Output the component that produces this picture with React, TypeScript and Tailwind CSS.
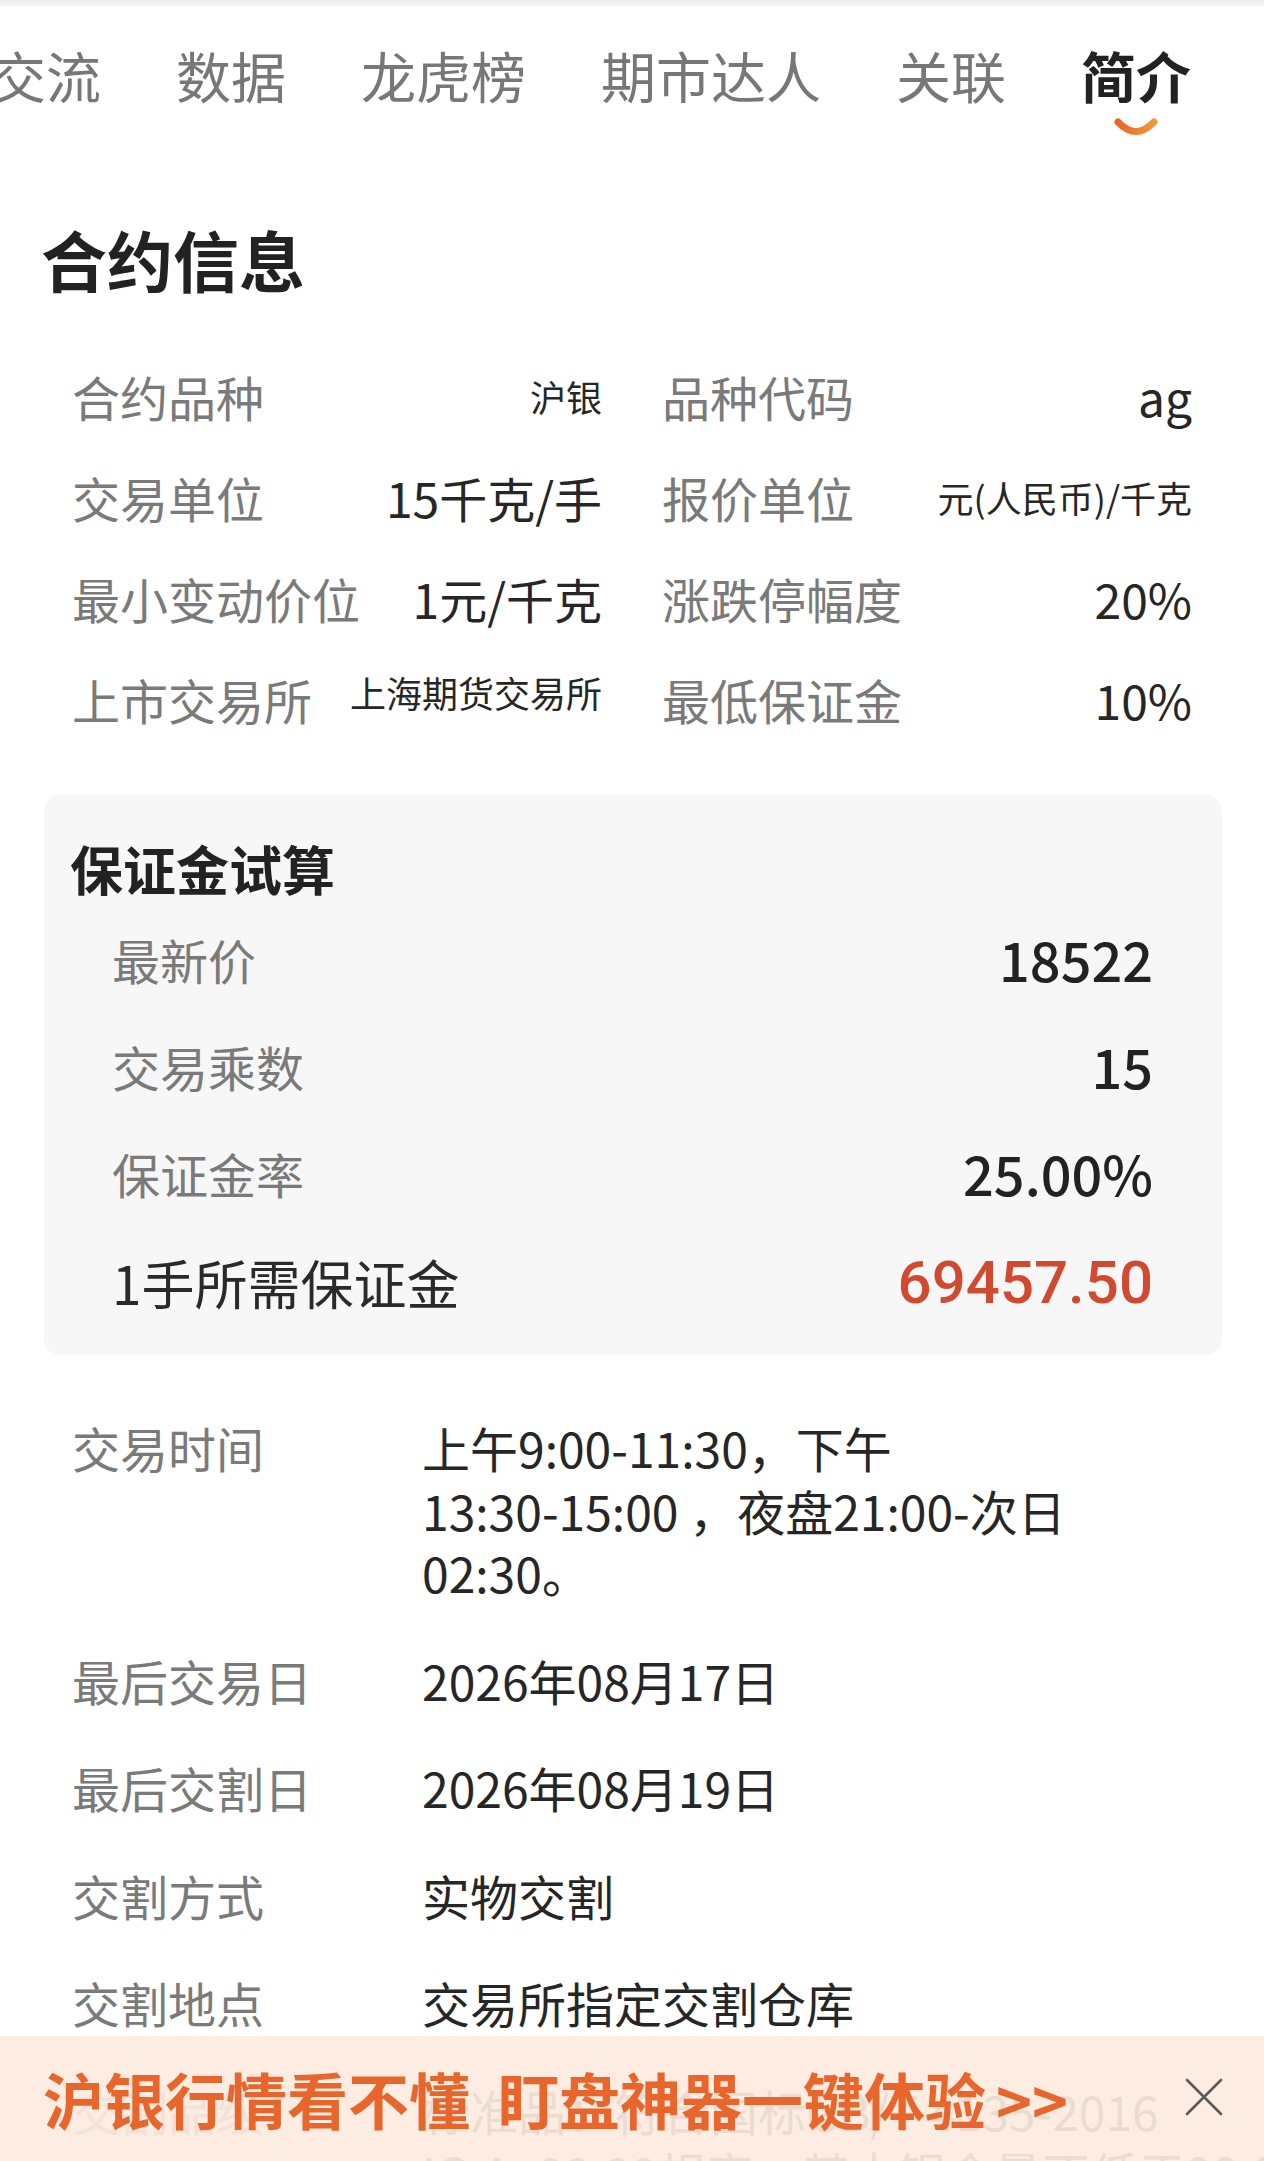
import React from "react";

const TABS = ["交流", "数据", "龙虎榜", "期市达人", "关联", "简介"];

const INFO: { label: string; value: string; small?: boolean; lift?: boolean }[] = [
  { label: "合约品种", value: "沪银", small: true },
  { label: "品种代码", value: "ag" },
  { label: "交易单位", value: "15千克/手" },
  { label: "报价单位", value: "元(人民币)/千克", small: true },
  { label: "最小变动价位", value: "1元/千克" },
  { label: "涨跌停幅度", value: "20%" },
  { label: "上市交易所", value: "上海期货交易所", small: true, lift: true },
  { label: "最低保证金", value: "10%" },
];

const CALC = [
  { label: "最新价", value: "18522" },
  { label: "交易乘数", value: "15" },
  { label: "保证金率", value: "25.00%" },
];

const DETAILS: { label: string; lines: string[] }[] = [
  { label: "交易时间", lines: ["上午9:00-11:30，下午", "13:30-15:00 ，夜盘21:00-次日", "02:30。"] },
  { label: "最后交易日", lines: ["2026年08月17日"] },
  { label: "最后交割日", lines: ["2026年08月19日"] },
  { label: "交割方式", lines: ["实物交割"] },
  { label: "交割地点", lines: ["交易所指定交割仓库"] },
  { label: "交割品级", lines: ["标准品：符合国标GB/T 4135-2016", "IC-Ag99.99规定，其中银含量不低于99.99%"] },
];

function Smile() {
  return (
    <svg width="48" height="22" viewBox="0 0 48 22">
      <defs>
        <linearGradient id="smile" x1="0" y1="0" x2="1" y2="0">
          <stop offset="0" stopColor="#ec6328" />
          <stop offset="1" stopColor="#ee9a3c" />
        </linearGradient>
      </defs>
      <path d="M6 5 Q24 24 42 5" fill="none" stroke="url(#smile)" strokeWidth="7" strokeLinecap="round" />
    </svg>
  );
}

export default function App() {
  return (
    <div className="relative w-[1264px] h-[2161px] overflow-hidden bg-white font-['Noto_Sans_CJK_SC',sans-serif]">
      <div className="h-[6px] bg-gradient-to-b from-[#ebebeb] to-[#f7f7f7]" />

      {/* tabs */}
      <div className="flex items-start gap-[75px] ml-[-9px] pt-[41px] whitespace-nowrap">
        {TABS.map((t) =>
          t === "简介" ? (
            <div key={t} className="flex flex-col items-center">
              <span className="text-[55px] leading-none font-bold text-[#222]">{t}</span>
              <div className="mt-[15px]">
                <Smile />
              </div>
            </div>
          ) : (
            <span key={t} className="text-[55px] leading-none text-[#777]">
              {t}
            </span>
          )
        )}
      </div>

      <h1 className="mt-[86px] pl-[41px] text-[66px] leading-none font-bold text-[#222]">合约信息</h1>

      <div className="mt-[54px] grid grid-cols-2 gap-x-[60px] px-[72px]">
        {INFO.map((it) => (
          <div key={it.label} className="flex h-[101px] items-center justify-between">
            <span className="text-[48px] leading-none text-[#7a7a7a]">{it.label}</span>
            <span
              className={
                it.small
                  ? `text-[36px] leading-none text-[#262626] ${it.lift ? "mb-[14px]" : ""}`
                  : "text-[48px] leading-none text-[#262626]"
              }
            >
              {it.value}
            </span>
          </div>
        ))}
      </div>

      {/* margin calculator */}
      <div className="mt-[46px] ml-[44px] mr-[42px] rounded-[16px] bg-[#f7f7f7] pt-[47px] pb-[16px] pl-[26px] pr-[69px]">
        <div className="text-[53px] leading-none font-bold text-[#222]">保证金试算</div>
        <div className="mt-[10px] pl-[42px]">
          {CALC.map((r) => (
            <div key={r.label} className="flex h-[107px] items-center justify-between">
              <span className="text-[48px] leading-none text-[#7a7a7a]">{r.label}</span>
              <span className="text-[54px] leading-none font-medium text-[#222]">{r.value}</span>
            </div>
          ))}
          <div className="flex h-[113px] items-center justify-between">
            <span className="text-[53px] leading-none text-[#2a2a2a]">1手所需保证金</span>
            <span className="font-['Roboto',sans-serif] text-[60px] leading-none font-medium text-[#d14a30]">69457.50</span>
          </div>
        </div>
      </div>

      {/* details */}
      <div className="mt-[61px] flex flex-col gap-[45px] px-[72px]">
        {DETAILS.map((d) => (
          <div key={d.label} className="flex items-start">
            <span className="w-[350px] shrink-0 text-[48px] leading-[62.5px] text-[#7a7a7a]">{d.label}</span>
            <div className="flex flex-col text-[48px] leading-[62.5px] text-[#262626] whitespace-nowrap">
              {d.lines.map((l) => (
                <span key={l}>{l}</span>
              ))}
            </div>
          </div>
        ))}
      </div>

      {/* promo banner */}
      <div className="absolute bottom-0 left-0 right-0 flex h-[125px] items-center justify-between bg-[rgba(252,234,223,0.92)] pl-[43px] pr-[40px]">
        <div className="flex items-center text-[61px] leading-none font-bold text-[#e8652b] whitespace-nowrap">
          <span>沪银行情看不懂</span>
          <span className="ml-[28px]">盯盘神器一键体验</span>
          <span className="ml-[10px]">&gt;&gt;</span>
        </div>
        <svg width="40" height="40" viewBox="0 0 40 40" className="mt-[-4px]">
          <path d="M3 3 L37 37 M37 3 L3 37" stroke="#5a5a5a" strokeWidth="2.6" strokeLinecap="round" />
        </svg>
      </div>
    </div>
  );
}
